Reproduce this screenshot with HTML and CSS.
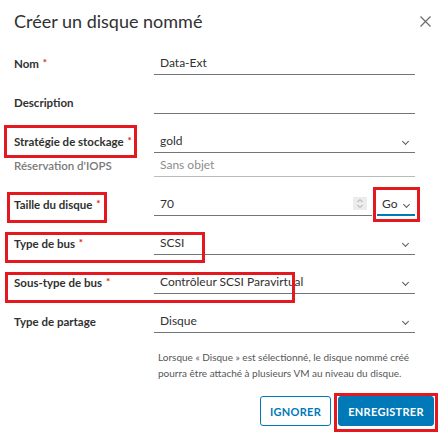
FILE: index.html
```html
<!DOCTYPE html>
<html lang="fr">
<head>
<meta charset="utf-8">
<title>Créer un disque nommé</title>
<link rel="stylesheet" href="styles.css">
</head>
<body>
<div class="modal">
  <header class="modal-header">
    <h3 class="modal-title">Créer un disque nommé</h3>
    <button class="close" aria-label="Fermer">
      <svg width="11" height="11" viewBox="0 0 11 11"><path d="M0.5 0.5 L10.5 10.5 M10.5 0.5 L0.5 10.5" stroke="#6b6b6b" stroke-width="1.2" fill="none"/></svg>
    </button>
  </header>

  <form class="form">
    <div class="row">
      <label class="lbl">Nom <span class="req">*</span></label>
      <div class="ctl">Data-Ext</div>
    </div>
    <div class="row">
      <label class="lbl">Description</label>
      <div class="ctl"></div>
    </div>
    <div class="row">
      <label class="lbl">Stratégie de stockage <span class="req">*</span></label>
      <div class="ctl select">gold<span class="chev"></span></div>
    </div>
    <div class="row row-sub">
      <label class="lbl lbl-muted">Réservation d'IOPS</label>
      <div class="ctl ctl-muted">Sans objet</div>
    </div>
    <div class="row">
      <label class="lbl">Taille du disque <span class="req">*</span></label>
      <div class="size">
        <div class="ctl number">70
          <span class="spin">
            <svg width="8" height="11" viewBox="0 0 8 11"><path d="M1.5 4 L4 1.5 L6.5 4 M1.5 7 L4 9.5 L6.5 7" stroke="#9a9a9a" stroke-width="0.9" fill="none"/></svg>
          </span>
        </div>
        <div class="ctl unit">Go<span class="chev"></span></div>
      </div>
    </div>
    <div class="row">
      <label class="lbl">Type de bus <span class="req">*</span></label>
      <div class="ctl select">SCSI<span class="chev"></span></div>
    </div>
    <div class="row">
      <label class="lbl">Sous-type de bus <span class="req">*</span></label>
      <div class="ctl select">Contrôleur SCSI Paravirtual<span class="chev"></span></div>
    </div>
    <div class="row">
      <label class="lbl">Type de partage</label>
      <div class="ctl select">Disque<span class="chev"></span></div>
    </div>
  </form>

  <p class="help">Lorsque « Disque » est sélectionné, le disque nommé créé<br>pourra être attaché à plusieurs VM au niveau du disque.</p>

  <footer class="footer">
    <button class="btn btn-outline">IGNORER</button>
    <button class="btn btn-primary">ENREGISTRER</button>
  </footer>

  <div class="mark mark-strategy"></div>
  <div class="mark mark-size"></div>
  <div class="mark mark-unit"></div>
  <div class="mark mark-bus"></div>
  <div class="mark mark-subbus"></div>
  <div class="mark mark-save"></div>
</div>
</body>
</html>
```

FILE: styles.css
```css
* { box-sizing: border-box; }

html, body {
  margin: 0;
  padding: 0;
  background: #ffffff;
}

body {
  font-family: Lato, "Noto Sans", "Liberation Sans", sans-serif;
  color: #313131;
}

.modal {
  position: relative;
  width: 448px;
  height: 437px;
  overflow: hidden;
}

.modal-header {
  display: flex;
  justify-content: space-between;
  align-items: center;
  padding: 9px 17px 0 14px;
}

.modal-title {
  margin: 0;
  font-size: 18px;
  font-weight: 400;
  line-height: 24px;
  color: #313131;
}

.close {
  border: 0;
  background: none;
  padding: 0;
  width: 11px;
  height: 11px;
  display: flex;
  margin-top: 1px;
}

.form {
  display: flex;
  flex-direction: column;
  gap: 15px;
  margin-top: 18px;
  padding-left: 14px;
}

.row {
  display: grid;
  grid-template-columns: 140px 261px;
  height: 24px;
  align-items: center;
}

.row-sub {
  margin-top: -15px;
}

.lbl {
  font-size: 11.5px;
  font-weight: 700;
  color: #313131;
}

.lbl-muted {
  color: #7a7a7a;
  font-weight: 600;
}

.req {
  color: #e12200;
  font-size: 10px;
  position: relative;
  top: -2px;
  margin-left: 1px;
}

.ctl {
  height: 24px;
  display: flex;
  align-items: center;
  padding: 0 6px;
  border-bottom: 1px solid #6f777a;
  font-size: 12px;
  color: #313131;
  position: relative;
}

.ctl-muted {
  color: #8c8c8c;
  border-bottom-color: #b8bcbd;
}

.select { justify-content: flex-start; }

.chev {
  position: absolute;
  right: 7px;
  top: 10px;
  width: 5px;
  height: 5px;
  border-right: 1.2px solid #5a5a5a;
  border-bottom: 1.2px solid #5a5a5a;
  transform: rotate(45deg);
}

.size {
  display: flex;
  gap: 5px;
}

.number {
  width: 218px;
}

.spin {
  position: absolute;
  right: 5px;
  top: 5px;
  width: 14px;
  height: 13px;
  background: #ececec;
  display: flex;
  align-items: center;
  justify-content: center;
}

.unit {
  width: 38px;
  padding-left: 5px;
  border-bottom: 2px solid #0079b8;
}

.unit .chev {
  right: 6px;
}

.help {
  margin: 16px 0 0 158px;
  font-size: 10px;
  line-height: 16px;
  color: #565656;
}

.footer {
  display: flex;
  justify-content: flex-end;
  gap: 7px;
  padding-right: 14px;
  margin-top: 15px;
}

.btn {
  height: 30px;
  border-radius: 3px;
  font-family: Lato, "Noto Sans", sans-serif;
  font-size: 11px;
  font-weight: 700;
  letter-spacing: 0.3px;
  padding: 0;
  cursor: pointer;
}

.btn-outline {
  width: 71px;
  background: #ffffff;
  color: #0079b8;
  border: 1px solid #0079b8;
}

.btn-primary {
  width: 96px;
  background: #0079b8;
  color: #ffffff;
  border: 1px solid #0079b8;
}

.mark {
  position: absolute;
  border: 3px solid #e3191f;
  pointer-events: none;
}

.mark-strategy { left: 4px; top: 125px; width: 133px; height: 33px; }
.mark-size { left: 7px; top: 192px; width: 100px; height: 31px; }
.mark-unit { left: 373px; top: 187px; width: 47px; height: 35px; }
.mark-bus { left: 5px; top: 232px; width: 200px; height: 31px; }
.mark-subbus { left: 5px; top: 272px; width: 290px; height: 31px; }
.mark-save { left: 334px; top: 393px; width: 104px; height: 39px; }
```
